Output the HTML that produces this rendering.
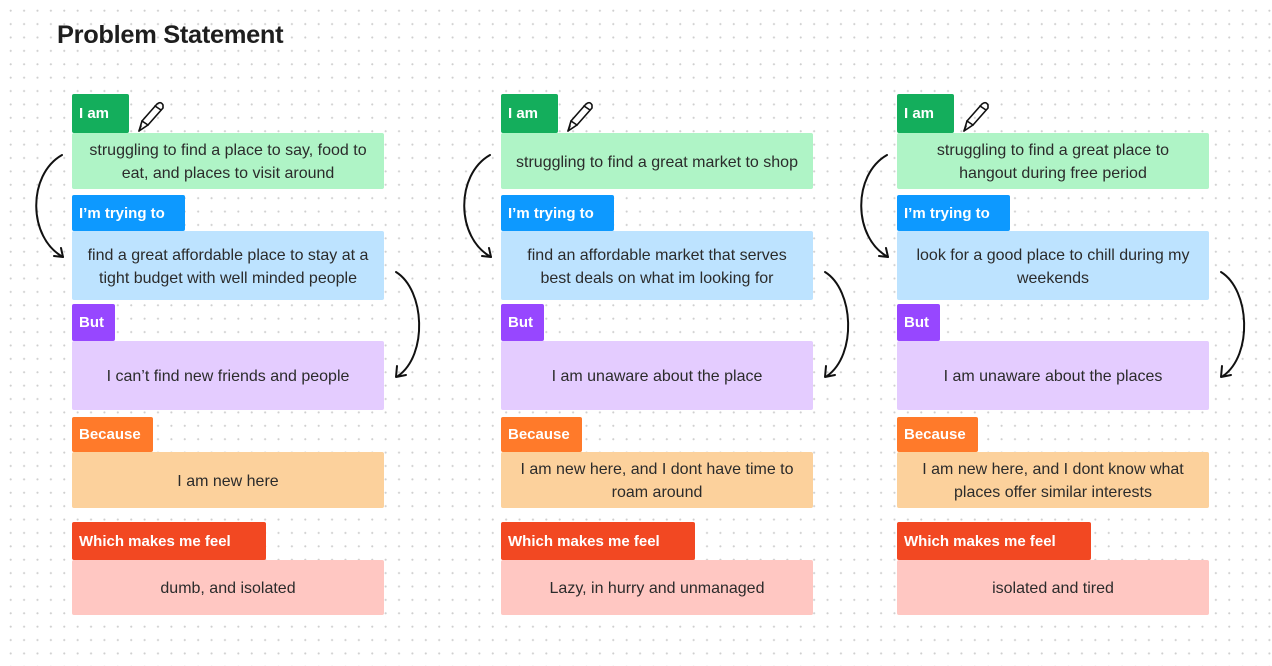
<!DOCTYPE html>
<html><head><meta charset="utf-8"><style>
body{margin:0;width:1272px;height:666px;overflow:hidden;background:#fff;font-family:"Liberation Sans",Arial,sans-serif;position:relative;
background-image:radial-gradient(circle,#cfcfcf 0.9px,transparent 1.2px);background-size:13.4px 13.4px;background-position:4px 4px}
h1{position:absolute;left:57px;top:21px;margin:0;font-size:25.4px;font-weight:bold;color:#1e1e1e;letter-spacing:-0.3px}
.t{position:absolute;color:#fff;font-weight:bold;font-size:15px;padding-left:7px;box-sizing:border-box;display:flex;align-items:center;border-radius:2px}
.b{position:absolute;width:312px;color:#2b2b2b;font-size:16px;line-height:23px;text-align:center;display:flex;align-items:center;justify-content:center;border-radius:2px;box-sizing:border-box;padding:2px 10px 0}
svg{position:absolute;left:0;top:0}
</style></head><body>
<h1>Problem Statement</h1>

<!-- column 1 -->
<div class="t" style="left:72px;top:94px;width:57px;height:39px;background:#14ae5c">I am</div>
<div class="b" style="left:72px;top:133px;height:56px;background:#aff4c6">struggling to find a place to say, food to eat, and places to visit around</div>
<div class="t" style="left:72px;top:195px;width:113px;height:36px;background:#0d99ff">I’m trying to</div>
<div class="b" style="left:72px;top:231px;height:69px;background:#bde3ff">find a great affordable place to stay at a tight budget with well minded people</div>
<div class="t" style="left:72px;top:304px;width:43px;height:37px;background:#9747ff">But</div>
<div class="b" style="left:72px;top:341px;height:69px;background:#e4ccff">I can’t find new friends and people</div>
<div class="t" style="left:72px;top:417px;width:81px;height:35px;background:#ff7a2a">Because</div>
<div class="b" style="left:72px;top:452px;height:56px;background:#fcd19c">I am new here</div>
<div class="t" style="left:72px;top:522px;width:194px;height:38px;background:#f24822">Which makes me feel</div>
<div class="b" style="left:72px;top:560px;height:55px;background:#ffc7c2">dumb, and isolated</div>

<!-- column 2 -->
<div class="t" style="left:501px;top:94px;width:57px;height:39px;background:#14ae5c">I am</div>
<div class="b" style="left:501px;top:133px;height:56px;background:#aff4c6">struggling to find a great market to shop</div>
<div class="t" style="left:501px;top:195px;width:113px;height:36px;background:#0d99ff">I’m trying to</div>
<div class="b" style="left:501px;top:231px;height:69px;background:#bde3ff;padding:2px 20px 0">find an affordable market that serves best deals on what im looking for</div>
<div class="t" style="left:501px;top:304px;width:43px;height:37px;background:#9747ff">But</div>
<div class="b" style="left:501px;top:341px;height:69px;background:#e4ccff">I am unaware about the place</div>
<div class="t" style="left:501px;top:417px;width:81px;height:35px;background:#ff7a2a">Because</div>
<div class="b" style="left:501px;top:452px;height:56px;background:#fcd19c">I am new here, and I dont have time to roam around</div>
<div class="t" style="left:501px;top:522px;width:194px;height:38px;background:#f24822">Which makes me feel</div>
<div class="b" style="left:501px;top:560px;height:55px;background:#ffc7c2">Lazy, in hurry and unmanaged</div>

<!-- column 3 -->
<div class="t" style="left:897px;top:94px;width:57px;height:39px;background:#14ae5c">I am</div>
<div class="b" style="left:897px;top:133px;height:56px;background:#aff4c6;padding:2px 30px 0">struggling to find a great place to hangout during free period</div>
<div class="t" style="left:897px;top:195px;width:113px;height:36px;background:#0d99ff">I’m trying to</div>
<div class="b" style="left:897px;top:231px;height:69px;background:#bde3ff">look for a good place to chill during my weekends</div>
<div class="t" style="left:897px;top:304px;width:43px;height:37px;background:#9747ff">But</div>
<div class="b" style="left:897px;top:341px;height:69px;background:#e4ccff">I am unaware about the places</div>
<div class="t" style="left:897px;top:417px;width:81px;height:35px;background:#ff7a2a">Because</div>
<div class="b" style="left:897px;top:452px;height:56px;background:#fcd19c">I am new here, and I dont know what places offer similar interests</div>
<div class="t" style="left:897px;top:522px;width:194px;height:38px;background:#f24822">Which makes me feel</div>
<div class="b" style="left:897px;top:560px;height:55px;background:#ffc7c2">isolated and tired</div>

<svg width="1272" height="666" fill="none" stroke="#111" stroke-width="2" stroke-linecap="round" stroke-linejoin="round">
<defs>
<g id="arrL"><path d="M62 155 C27 175 28 238 63 257"/><path d="M54 256 L63 257 L61 248"/></g>
<g id="arrR"><path d="M396 272 C425 290 428 355 398 376"/><path d="M397 366 L396 377 L406 375"/></g>
<g id="pen"><path d="M139 131 L142 121 L157 104 Q161 101 163 105 L163 108 L148 125 Z"/><path d="M142 121 L148 125"/><path d="M155 106 L161 110"/><path d="M139 131 L141 126"/></g>
</defs>
<use href="#arrL"/><use href="#arrL" x="428"/><use href="#arrL" x="825"/>
<use href="#arrR"/><use href="#arrR" x="429"/><use href="#arrR" x="825"/>
<use href="#pen" stroke-width="1.6"/><use href="#pen" x="429" stroke-width="1.6"/><use href="#pen" x="825" stroke-width="1.6"/>
</svg>
</body></html>
